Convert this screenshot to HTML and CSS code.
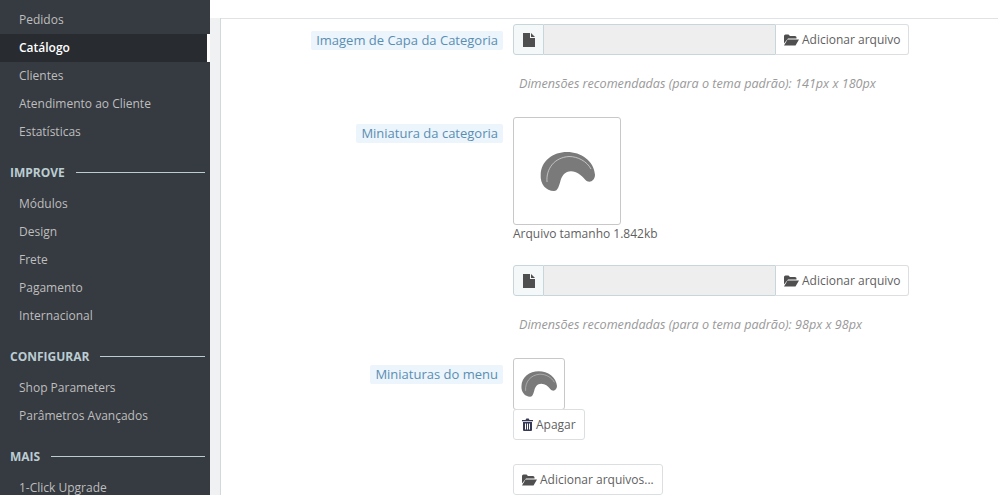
FILE: index.html
```html
<!DOCTYPE html>
<html lang="pt">
<head>
    <meta charset="UTF-8">
    <meta name="viewport" content="width=device-width, initial-scale=1.0">
    <title>Categoria</title>
    <link rel="stylesheet" href="styles.css">
</head>
<body>
    <svg class="icon-defs" width="0" height="0">
        <defs>
            <symbol id="crescent" viewBox="0 0 55 39">
                <path d="M.7 22.700C1 9 13 0 27 0c14 0 27 9 28 22.700 0 6.300-6 9.300-10 4.800-4-4.500-8-8.200-14-8.200-6 0-9 4.700-10.300 8.700C19 34 18 39 14 39 6 39 0 32 .7 22.700z" fill="#7a7a7a"/>
                <path d="M7 30C6 17 14 5.500 29 4.500c9 0 18 5 22 12.500" fill="none" stroke="#d4d4d4" stroke-width=".8"/>
            </symbol>
            <symbol id="file" viewBox="0 0 12 14">
                <path d="M0 0h7v5h5v9H0zM8 0l4 4H8z" fill="#4f4f4f"/>
            </symbol>
            <symbol id="folder" viewBox="0 0 15 12">
                <path d="M0 2q0-1.500 1.500-1.500h3L6 2h5q1.500 0 1.500 1.500V4.500H4L0 9.500zM3.500 5.500H15l-3.500 6H0z" fill="#4f4f4f"/>
            </symbol>
            <symbol id="trash" viewBox="0 0 11 13">
                <path d="M3.500 2 4.300.500h2.400L7.500 2H11v1.200H0V2zM1 4h9v8q0 1-1 1H2q-1 0-1-1zM3 5.500v6h1v-6zM5 5.500v6h1v-6zM7 5.500v6h1v-6z" fill="#363a55" fill-rule="evenodd"/>
            </symbol>
        </defs>
    </svg>

    <div class="page">
        <nav class="sidebar">
            <a class="nav-item" href="#">Pedidos</a>
            <a class="nav-item active" href="#">Catálogo</a>
            <a class="nav-item" href="#">Clientes</a>
            <a class="nav-item" href="#">Atendimento ao Cliente</a>
            <a class="nav-item" href="#">Estatísticas</a>
            <div class="nav-title"><span>IMPROVE</span></div>
            <a class="nav-item" href="#">Módulos</a>
            <a class="nav-item" href="#">Design</a>
            <a class="nav-item" href="#">Frete</a>
            <a class="nav-item" href="#">Pagamento</a>
            <a class="nav-item" href="#">Internacional</a>
            <div class="nav-title"><span>CONFIGURAR</span></div>
            <a class="nav-item" href="#">Shop Parameters</a>
            <a class="nav-item" href="#">Parâmetros Avançados</a>
            <div class="nav-title"><span>MAIS</span></div>
            <a class="nav-item" href="#">1-Click Upgrade</a>
        </nav>

        <div class="gutter"></div>

        <main class="content">
            <div class="form-row row-cover">
                <div class="label-col"><span class="field-label">Imagem de Capa da Categoria</span></div>
                <div class="control-col">
                    <div class="file-group">
                        <span class="file-addon"><svg class="icon-file"><use href="#file"/></svg></span>
                        <span class="file-name"></span>
                        <button class="btn"><svg class="icon-folder"><use href="#folder"/></svg>Adicionar arquivo</button>
                    </div>
                    <p class="help">Dimensões recomendadas (para o tema padrão): 141px x 180px</p>
                </div>
            </div>

            <div class="form-row row-thumb">
                <div class="label-col"><span class="field-label">Miniatura da categoria</span></div>
                <div class="control-col">
                    <div class="thumb thumb-large"><svg class="crescent-large"><use href="#crescent"/></svg></div>
                    <div class="file-size">Arquivo tamanho 1.842kb</div>
                    <div class="file-group">
                        <span class="file-addon"><svg class="icon-file"><use href="#file"/></svg></span>
                        <span class="file-name"></span>
                        <button class="btn"><svg class="icon-folder"><use href="#folder"/></svg>Adicionar arquivo</button>
                    </div>
                    <p class="help">Dimensões recomendadas (para o tema padrão): 98px x 98px</p>
                </div>
            </div>

            <div class="form-row row-menu">
                <div class="label-col"><span class="field-label">Miniaturas do menu</span></div>
                <div class="control-col">
                    <div class="thumb thumb-small"><svg class="crescent-small"><use href="#crescent"/></svg></div>
                    <button class="btn btn-delete"><svg class="icon-trash"><use href="#trash"/></svg>Apagar</button>
                    <button class="btn btn-add"><svg class="icon-folder"><use href="#folder"/></svg>Adicionar arquivos...</button>
                </div>
            </div>
        </main>
    </div>
</body>
</html>
```

FILE: styles.css
```css
html, body {
    height: 100%;
}
body {
    font-family: "Open Sans", Arial, sans-serif;
    font-size: 12px;
    margin: 0;
    color: #5f5f5f;
    background: #fff;
    overflow: hidden;
}
.icon-defs {
    display: block;
    height: 0;
}
.page {
    display: flex;
    height: 495px;
    overflow: hidden;
}

/* sidebar */
.sidebar {
    flex: 0 0 210px;
    display: flex;
    flex-direction: column;
    padding-top: 6px;
    background: #363a41;
    box-sizing: border-box;
}
.nav-item {
    flex: 0 0 28px;
    display: block;
    line-height: 27px;
    padding-left: 19px;
    color: #bebebe;
    font-size: 12px;
    text-decoration: none;
}
.nav-item.active {
    background: #282b30;
    border-right: 3px solid #fff;
    color: #fff;
    font-weight: 600;
}
.nav-title {
    flex: 0 0 44px;
    display: flex;
    align-items: center;
    padding: 8px 5px 0 10px;
    box-sizing: border-box;
    color: #bbcdd2;
    font-size: 12px;
    font-weight: 700;
}
.nav-title::after {
    content: "";
    flex: 1;
    height: 1px;
    margin-left: 11px;
    background: #bbcdd2;
}

.gutter {
    flex: 0 0 10px;
    margin-top: 18px;
    background: #eff1f2;
    border-right: 1px solid #d3d8db;
}

/* form */
.content {
    flex: 1;
    margin-top: 18px;
    border-top: 1px solid #dfe3e5;
}
.form-row {
    display: flex;
    gap: 10px;
}
.row-cover {
    padding-top: 5px;
    height: 93px;
    box-sizing: border-box;
}
.row-thumb {
    height: 241px;
    margin-top: 5px;
    box-sizing: border-box;
}
.label-col {
    flex: 0 0 282px;
    text-align: right;
    padding-top: 7px;
}
.field-label {
    display: inline-block;
    padding: 0 5px;
    height: 19px;
    line-height: 18px;
    font-size: 13px;
    color: #5b8db3;
    background: #ebf5fb;
    border-radius: 2px;
}
.control-col {
    width: 396px;
}
.file-group {
    display: flex;
    height: 31px;
}
.file-addon {
    flex: 0 0 29px;
    display: flex;
    align-items: center;
    justify-content: center;
    background: #f5f8f9;
    border: 1px solid #c7d6db;
    border-radius: 3px 0 0 3px;
}
.file-name {
    flex: 1;
    background: #eee;
    border-top: 1px solid #c7d6db;
    border-bottom: 1px solid #c7d6db;
}
.file-group .btn {
    width: 134px;
    border-radius: 0 3px 3px 0;
    border-left-color: #c7d6db;
}
.btn {
    display: flex;
    align-items: center;
    height: 31px;
    padding: 0 8px;
    font-family: inherit;
    font-size: 12px;
    white-space: nowrap;
    color: #5f5f5f;
    background: #fff;
    border: 1px solid #dcdfe1;
    border-radius: 3px;
    box-sizing: border-box;
}
.icon-file {
    width: 12px;
    height: 14px;
}
.icon-folder {
    flex: none;
    width: 15px;
    height: 12px;
    margin-right: 3px;
}
.icon-trash {
    flex: none;
    width: 11px;
    height: 13px;
    margin-right: 3px;
}
.help {
    margin: 20px 0 0 6px;
    font-size: 12.6px;
    line-height: 18px;
    font-style: italic;
    color: #999;
}
.thumb {
    display: flex;
    align-items: center;
    justify-content: center;
    background: #fff;
    border: 1px solid #c8c8c8;
    border-radius: 3px;
    box-sizing: border-box;
}
.thumb-large {
    width: 108px;
    height: 108px;
}
.thumb-small {
    width: 52px;
    height: 52px;
}
.crescent-large {
    width: 55px;
    height: 39px;
}
.crescent-small {
    width: 36px;
    height: 26px;
}
.file-size {
    margin: 0 0 23px;
    line-height: 17px;
}
.btn-delete {
    margin-top: -1px;
    width: 72px;
}
.btn-add {
    margin-top: 24px;
    width: 150px;
}
```
